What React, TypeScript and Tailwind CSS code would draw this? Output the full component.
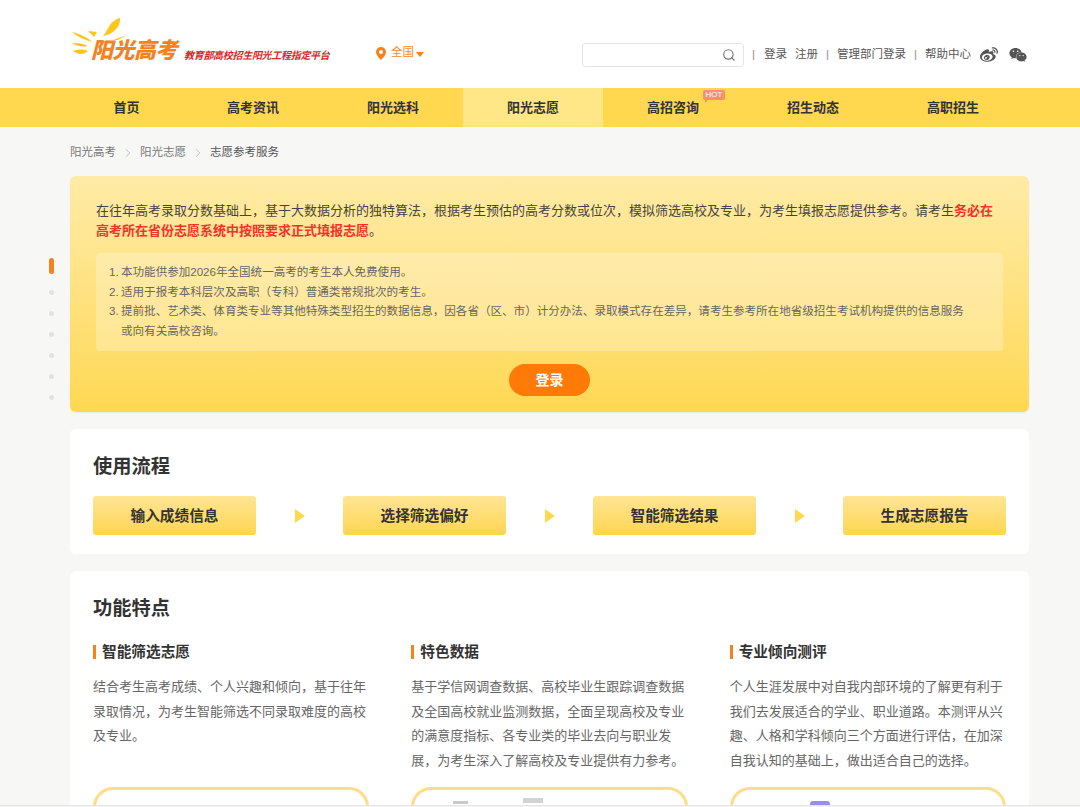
import { ChevronRight, Search } from "lucide-react";
import { FaWeibo, FaWeixin } from "react-icons/fa";

const cjk = "font-['Liberation_Sans','Noto_Sans_CJK_SC',sans-serif]";

const navItems = [
  { label: "首页", width: "w-[113px]" },
  { label: "高考资讯", width: "w-[140px]" },
  { label: "阳光选科", width: "w-[140px]" },
  { label: "阳光志愿", width: "w-[140px]", active: true },
  { label: "高招咨询", width: "w-[140px]", hot: true },
  { label: "招生动态", width: "w-[140px]" },
  { label: "高职招生", width: "w-[140px]" },
];

const steps = ["输入成绩信息", "选择筛选偏好", "智能筛选结果", "生成志愿报告"];

const features = [
  {
    title: "智能筛选志愿",
    text: "结合考生高考成绩、个人兴趣和倾向，基于往年录取情况，为考生智能筛选不同录取难度的高校及专业。",
  },
  {
    title: "特色数据",
    text: "基于学信网调查数据、高校毕业生跟踪调查数据及全国高校就业监测数据，全面呈现高校及专业的满意度指标、各专业类的毕业去向与职业发展，为考生深入了解高校及专业提供有力参考。",
  },
  {
    title: "专业倾向测评",
    text: "个人生涯发展中对自我内部环境的了解更有利于我们去发展适合的学业、职业道路。本测评从兴趣、人格和学科倾向三个方面进行评估，在加深自我认知的基础上，做出适合自己的选择。",
  },
];

function Logo() {
  return (
    <div className="relative h-[60px] w-[270px]">
      <svg className="absolute left-0 top-0" width="90" height="60" viewBox="0 0 90 60">
        {/* leaf and sun rays */}
        <path d="M33 26 C37 22 39 14 44 11 C46 9 49 8 50 8 C51 16 44 24 33 26Z" fill="#ffc61a" />
        <path d="M2 22 C10 24 17 27 22 32 C15 30 8 27 2 22Z" fill="#ffc61a" />
        <path d="M2 33 C8 33 14 34 18 36 C12 37 7 36 2 33Z" fill="#ffb81a" />
        <path d="M3 41 C8 39 14 39 18 41 C14 45 8 45 3 41Z" fill="#ffc61a" />
        <path d="M18 21 L27 22 L24 27Z" fill="#ffc61a" />
        <path d="M43 30 L57 25 L48 30Z" fill="#ffc61a" />
      </svg>
      <span className="absolute left-[21px] top-[25px] text-[22px] leading-[32px] font-black italic tracking-[-0.5px] text-[#f5821f]">
        阳光高考
      </span>
      <span className="absolute left-[114px] top-[38px] text-[10px] leading-[16px] font-bold italic tracking-[-0.3px] whitespace-nowrap text-[#d6262b]">
        教育部高校招生阳光工程指定平台
      </span>
    </div>
  );
}

function Header() {
  return (
    <header className="flex h-[88px] bg-white pl-[70px] pr-[53px]">
      <div className="mt-[10px]">
        <Logo />
      </div>
      <div className="ml-[36px] mt-[44px] flex h-[18px] items-center text-[11.5px] text-[#f5872a]">
        <svg width="10" height="13" viewBox="0 0 10 13">
          <path
            fillRule="evenodd"
            d="M5 0a5 5 0 0 1 5 5c0 3-3 6-5 8C3 11 0 8 0 5a5 5 0 0 1 5-5Zm0 3a2 2 0 1 0 0 4 2 2 0 0 0 0-4Z"
            fill="#f5821f"
          />
        </svg>
        <span className="ml-[5px]">全国</span>
        <span className="ml-[2px] mt-[2px] h-0 w-0 border-x-[4px] border-t-[5px] border-x-transparent border-t-[#f5821f]" />
      </div>
      <div className="ml-auto mt-[43px] flex h-[24px] items-center text-[11.5px] text-[#555]">
        <div className="flex h-[24px] w-[162px] items-center justify-end rounded-[3px] border border-[#e4e4e4] pr-[7px]">
          <Search size={14} className="text-[#777]" />
        </div>
        <span className="ml-[8px] text-[#888]">|</span>
        <span className="ml-[9px]">登录</span>
        <span className="ml-[8px]">注册</span>
        <span className="ml-[8px] text-[#888]">|</span>
        <span className="ml-[8px]">管理部门登录</span>
        <span className="ml-[8px] text-[#888]">|</span>
        <span className="ml-[8px]">帮助中心</span>
        <FaWeibo size={18} className="ml-[9px] text-[#555]" />
        <FaWeixin size={18} className="ml-[11px] text-[#555]" />
      </div>
    </header>
  );
}

function Nav() {
  return (
    <nav className="flex h-[39px] bg-[#ffd850] pl-[70px]">
      {navItems.map((item) => (
        <div
          key={item.label}
          className={`flex h-full items-center justify-center pt-[1px] text-[13px] font-bold text-[#333] ${item.width} ${item.active ? "bg-[#ffe687]" : ""}`}
        >
          <span className="relative">
            {item.label}
            {item.hot && (
              <span className="absolute left-[56px] top-[-8px] h-[10px] w-[22px] rounded-[2px] bg-[#fb8d72] text-center text-[8px] leading-[10px] font-normal text-white">
                HOT
                <span className="absolute left-[2px] top-[10px] h-0 w-0 border-r-[3px] border-t-[3px] border-r-transparent border-t-[#fb8d72]" />
              </span>
            )}
          </span>
        </div>
      ))}
    </nav>
  );
}

function Breadcrumb() {
  return (
    <div className="flex h-[49px] items-center pt-[2px] text-[11.5px] text-[#777]">
      <span>阳光高考</span>
      <ChevronRight size={14} strokeWidth={1} className="mx-[5px] text-[#999]" />
      <span>阳光志愿</span>
      <ChevronRight size={14} strokeWidth={1} className="mx-[5px] text-[#999]" />
      <span className="text-[#555]">志愿参考服务</span>
    </div>
  );
}

function IntroCard() {
  return (
    <section className="h-[236px] rounded-[6px] bg-gradient-to-b from-[#ffeba6] to-[#ffd850] px-[26px] pt-[25px] shadow-[0_1px_2px_rgba(0,0,0,0.06)]">
      <p className="text-[13px] leading-[20px] text-[#444]">
        在往年高考录取分数基础上，基于大数据分析的独特算法，根据考生预估的高考分数或位次，模拟筛选高校及专业，为考生填报志愿提供参考。请考生
        <span className="font-bold text-[#f5312c]">务必在高考所在省份志愿系统中按照要求正式填报志愿</span>
        。
      </p>
      <ol className="mt-[12px] h-[98px] rounded-[4px] bg-[#ffffff40] pl-[13px] pr-[30px] pt-[10px] text-[11.55px] leading-[19.5px] text-[#666]">
        <li className="flex">
          <span className="w-[12px] shrink-0">1.</span>
          <span>本功能供参加2026年全国统一高考的考生本人免费使用。</span>
        </li>
        <li className="flex">
          <span className="w-[12px] shrink-0">2.</span>
          <span>适用于报考本科层次及高职（专科）普通类常规批次的考生。</span>
        </li>
        <li className="flex">
          <span className="w-[12px] shrink-0">3.</span>
          <span>
            提前批、艺术类、体育类专业等其他特殊类型招生的数据信息，因各省（区、市）计分办法、录取模式存在差异，请考生参考所在地省级招生考试机构提供的信息服务或向有关高校咨询。
          </span>
        </li>
      </ol>
      <div className="mt-[13px] flex justify-center">
        <button className="h-[32px] w-[81px] rounded-full bg-[#ff7a06] text-[14px] font-bold text-white">登录</button>
      </div>
    </section>
  );
}

function StepsCard() {
  return (
    <section className="mt-[17px] h-[125px] rounded-[6px] bg-white px-[23px] pt-[24px]">
      <h2 className="text-[19.25px] leading-[28px] font-bold text-[#333]">使用流程</h2>
      <div className="mt-[15px] flex items-center justify-between">
        {steps.map((step, i) => (
          <div key={step} className="contents">
            <div className="flex h-[39px] w-[163px] items-center justify-center rounded-[3px] bg-gradient-to-b from-[#ffe594] to-[#ffd54a] text-[14.67px] font-bold text-[#333]">
              {step}
            </div>
            {i < steps.length - 1 && (
              <span className="h-0 w-0 border-y-[7px] border-l-[10px] border-y-transparent border-l-[#ffd850]" />
            )}
          </div>
        ))}
      </div>
    </section>
  );
}

function FeaturesCard() {
  return (
    <section className="mt-[17px] h-[260px] rounded-t-[6px] bg-white px-[23px] pt-[24px]">
      <h2 className="text-[19.25px] leading-[28px] font-bold text-[#333]">功能特点</h2>
      <div className="mt-[22px] grid grid-cols-3 gap-x-[42px]">
        {features.map((f, i) => (
          <div key={f.title}>
            <h3 className="border-l-[3px] border-[#f5821f] pl-[6px] text-[14.67px] leading-[14px] font-bold text-[#333]">
              {f.title}
            </h3>
            <p className="mt-[16px] h-[100px] text-[13px] leading-[24.7px] text-[#666]">{f.text}</p>
            <div className="relative mt-[12px] h-[40px] rounded-t-[20px] border-[3px] border-[#ffdc88] bg-white">
              {i === 1 && (
                <>
                  <span className="absolute left-[39px] top-[11px] h-[3px] w-[15px] bg-[#c9c9c9]" />
                  <span className="absolute left-[109px] top-[8px] h-[5px] w-[20px] bg-[#d2d2d2]" />
                </>
              )}
              {i === 2 && <span className="absolute left-[77px] top-[11px] h-[8px] w-[20px] rounded-t-[3px] bg-[#9b8cf0]" />}
            </div>
          </div>
        ))}
      </div>
    </section>
  );
}

function SideDots() {
  return (
    <div className="absolute left-[49px] top-[258px] flex w-[5px] flex-col items-center gap-[16px]">
      <span className="h-[16px] w-[5px] rounded-full bg-[#f5821f]" />
      {[0, 1, 2, 3, 4, 5].map((i) => (
        <span key={i} className="h-[5px] w-[5px] rounded-full bg-[#e2e2e2]" />
      ))}
    </div>
  );
}

export default function App() {
  return (
    <div className={`relative h-[807px] overflow-hidden bg-[#f7f7f6] ${cjk}`}>
      <Header />
      <Nav />
      <SideDots />
      <main className="mx-[70px] w-[959px]">
        <Breadcrumb />
        <IntroCard />
        <StepsCard />
        <FeaturesCard />
      </main>
      <div className="absolute inset-x-0 bottom-0 h-[2px] border-t border-[#e6e6e6] bg-[#f2f2f2]" />
    </div>
  );
}
